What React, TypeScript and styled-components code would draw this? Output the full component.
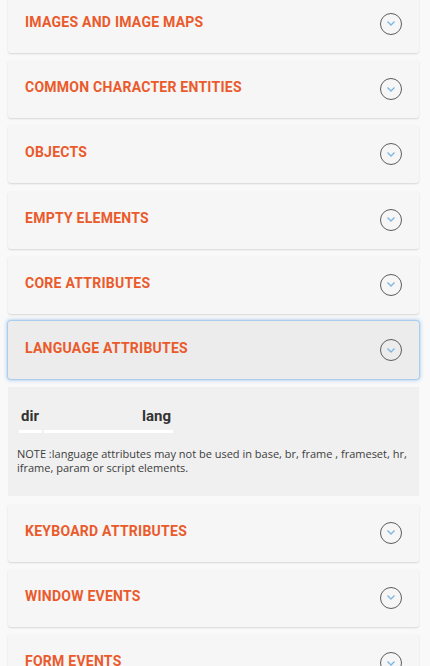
import React from "react";
import styled, { createGlobalStyle } from "styled-components";

const Global = createGlobalStyle`
  html, body { margin: 0; padding: 0; background: #f9f9f9; }
  body { font-family: Roboto, "Noto Sans", Arial, sans-serif; overflow: hidden; }
`;

const Page = styled.div`
  width: 430px;
  height: 666px;
  overflow: hidden;
  background: #f9f9f9;
`;

const List = styled.div`
  display: flex;
  flex-direction: column;
  gap: 7.25px;
  padding: 0 11px 0 8px;
  margin-top: -5.25px;
`;

const Card = styled.div<{ $active?: boolean }>`
  height: 58px;
  flex-shrink: 0;
  box-sizing: border-box;
  display: flex;
  align-items: center;
  justify-content: space-between;
  padding: 0 17px 0 17px;
  border-radius: 3px;
  background: ${(p) => (p.$active ? "#ececec" : "#f6f6f6")};
  box-shadow: ${(p) =>
    p.$active
      ? "0 0 1px 1px #a9cdee, 0 0 4px 1px rgba(120,170,225,0.6)"
      : "0 1px 2px rgba(0,0,0,0.14)"};
`;

const Title = styled.span`
  font-size: 14px;
  font-weight: 700;
  color: #ea5a2b;
  margin-top: -4px;
  letter-spacing: 0.25px;
`;

const Circle = styled.span`
  width: 20px;
  height: 20px;
  border: 1.5px solid #5d5d5d;
  border-radius: 50%;
  display: flex;
  align-items: center;
  justify-content: center;
`;

const Panel = styled.div`
  background: #f0f0f0;
  margin-top: 1px;
  height: 109px;
  flex-shrink: 0;
  padding: 20px 11px 0 9px;
  box-sizing: border-box;
`;

const AttrTable = styled.table`
  border-collapse: separate;
  border-spacing: 2px 0;
`;

const Th = styled.th<{ $w: number; $align: string }>`
  width: ${(p) => p.$w}px;
  text-align: ${(p) => p.$align};
  font-size: 15px;
  font-weight: 700;
  color: #333;
  padding: 0 2px 5px 2px;
  border-bottom: 3px solid #ffffff;
`;

const Note = styled.p`
  margin: 14px 0 0 0;
  font-family: "Open Sans", "Noto Sans", Arial, sans-serif;
  font-size: 11px;
  line-height: 14px;
  color: #3d3d3d;
`;

const Chevron = () => (
  <Circle>
    <svg width="10" height="7" viewBox="0 0 10 7">
      <path d="M1.5 1.5 L5 5 L8.5 1.5" fill="none" stroke="#7fb6e2" strokeWidth="1.4" />
    </svg>
  </Circle>
);

const titlesBefore = [
  "IMAGES AND IMAGE MAPS",
  "COMMON CHARACTER ENTITIES",
  "OBJECTS",
  "EMPTY ELEMENTS",
  "CORE ATTRIBUTES",
];
const titlesAfter = ["KEYBOARD ATTRIBUTES", "WINDOW EVENTS", "FORM EVENTS"];

export default function App() {
  return (
    <Page>
      <Global />
      <List>
        {titlesBefore.map((t) => (
          <Card key={t}>
            <Title>{t}</Title>
            <Chevron />
          </Card>
        ))}
        <Card $active>
          <Title>LANGUAGE ATTRIBUTES</Title>
          <Chevron />
        </Card>
        <Panel>
          <AttrTable>
            <thead>
              <tr>
                <Th $w={19} $align="left">dir</Th>
                <Th $w={125} $align="right">lang</Th>
              </tr>
            </thead>
          </AttrTable>
          <Note>
            NOTE :language attributes may not be used in base, br, frame , frameset, hr, iframe, param or script elements.
          </Note>
        </Panel>
        {titlesAfter.map((t) => (
          <Card key={t}>
            <Title>{t}</Title>
            <Chevron />
          </Card>
        ))}
      </List>
    </Page>
  );
}
